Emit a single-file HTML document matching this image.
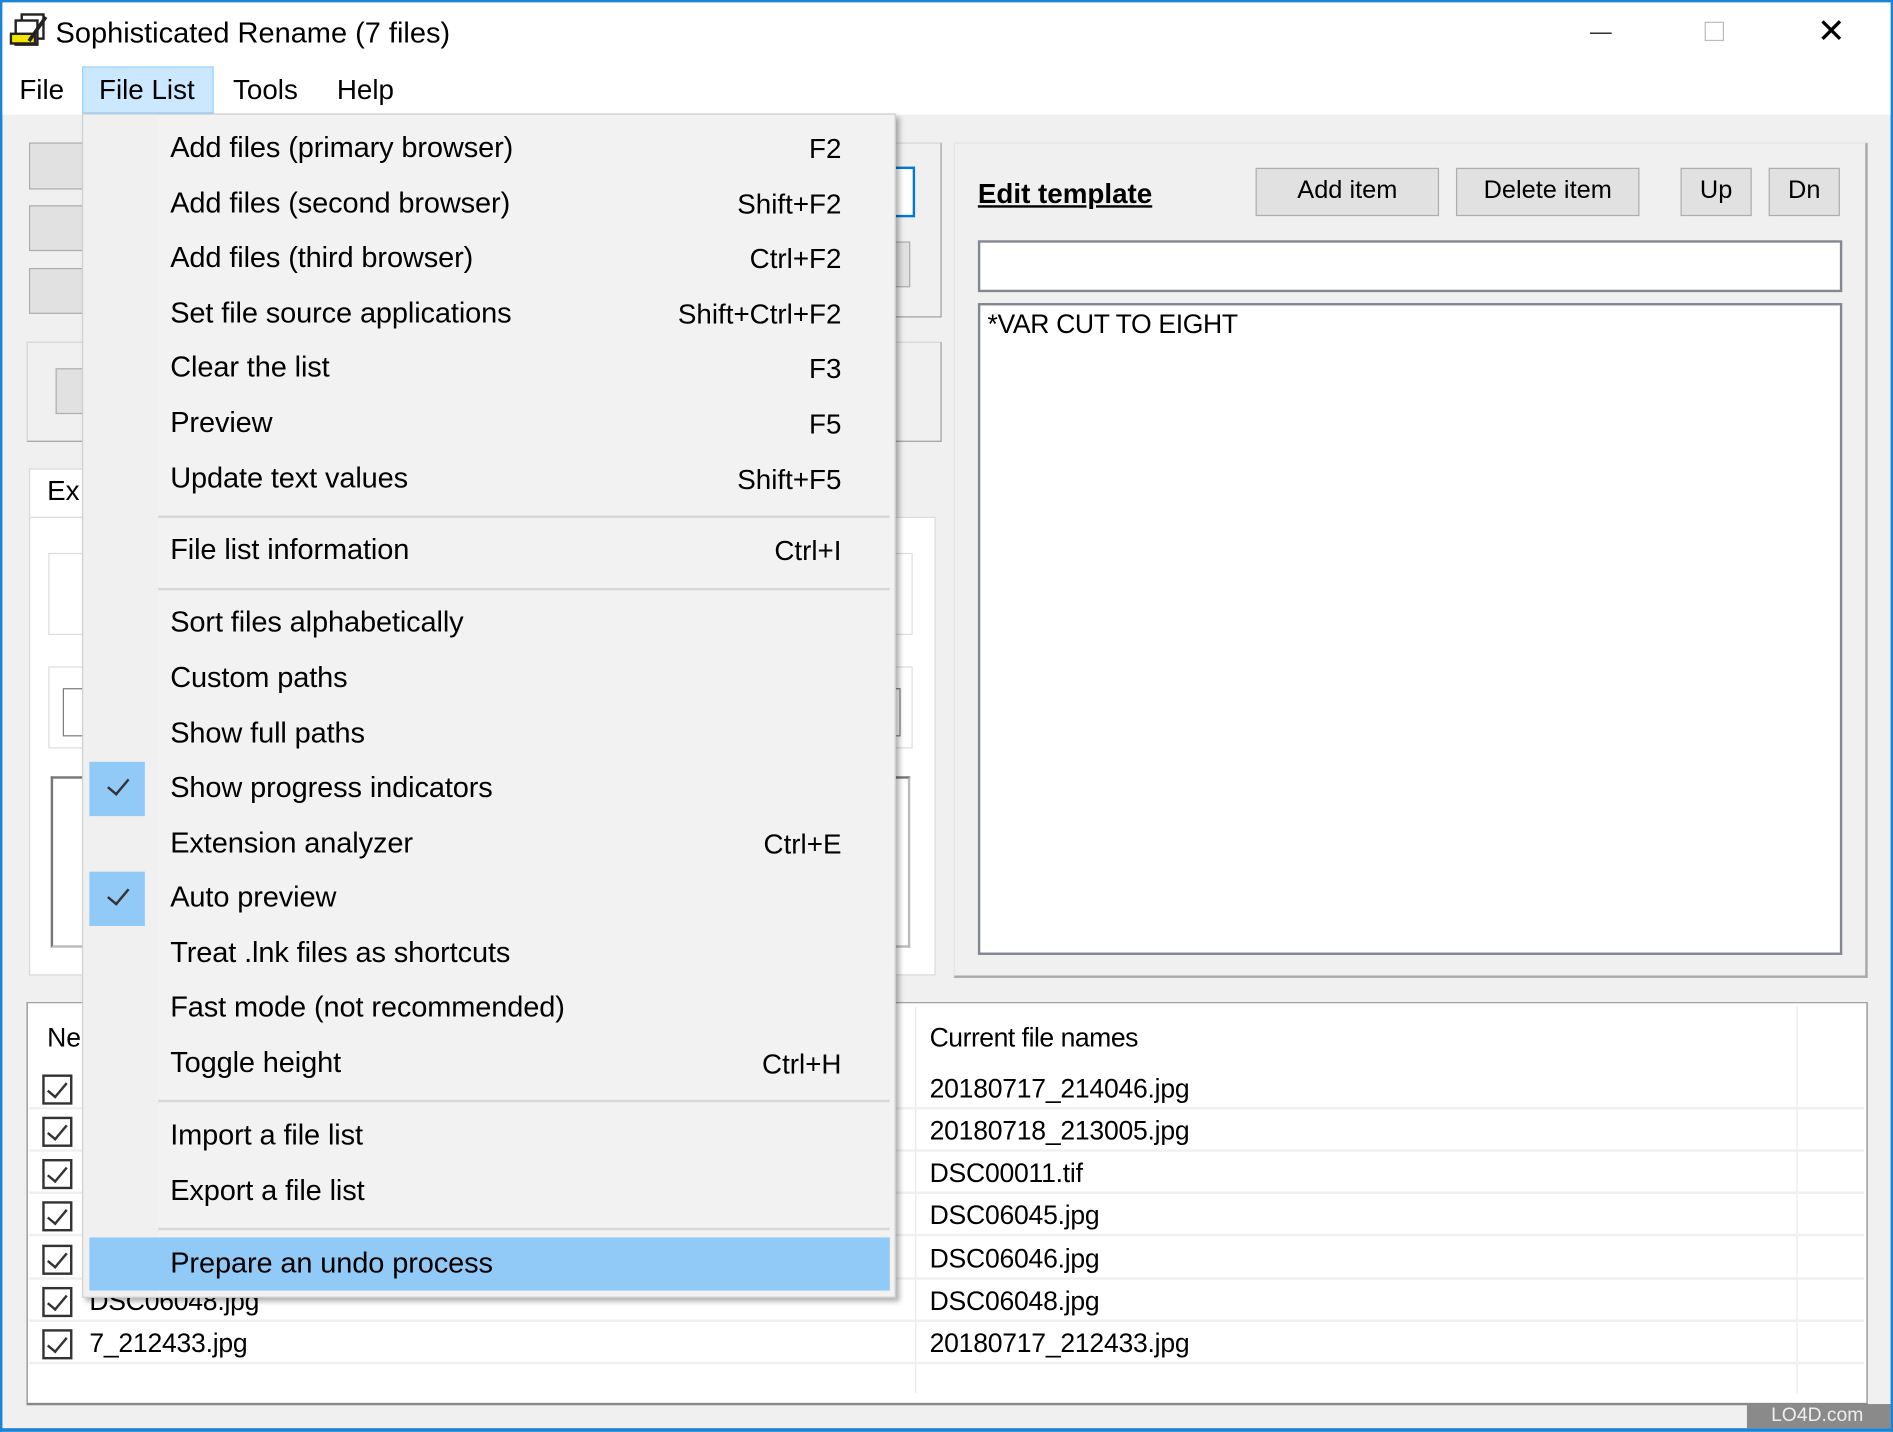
<!DOCTYPE html>
<html><head><meta charset="utf-8"><style>
*{margin:0;padding:0;box-sizing:border-box}
html,body{width:1893px;height:1432px;overflow:hidden;background:#f0f0f0}
#w{position:absolute;left:0;top:0;width:1568px;height:1186px;transform:scale(1.20727);transform-origin:0 0;font-family:"Liberation Sans",sans-serif;color:#000;background:#f0f0f0}
.a{position:absolute}
.t{position:absolute;white-space:nowrap;font-size:23px;line-height:28px}
.btn{position:absolute;background:#e1e1e1;border:1px solid #adadad;font-size:21px;text-align:center;line-height:36px}
.mi{position:absolute;left:72px;font-size:24px;line-height:28px;white-space:nowrap;letter-spacing:-0.1px}
.sc{position:absolute;right:44px;font-size:23px;line-height:28px;white-space:nowrap}
.sep{position:absolute;left:62px;width:606px;height:2px;background:#d8d8d8}
.row{position:absolute;left:24px;width:1520px;height:35px;border-bottom:2px solid #f0f0f0}
.cb{position:absolute;left:11px;top:6px;width:25px;height:25px;border:2px solid #333;background:#fff}
.cb:after{content:"";position:absolute;left:6px;top:1px;width:7px;height:14px;border:solid #333;border-width:0 2px 2px 0;transform:rotate(40deg)}
.fn{position:absolute;font-size:22px;line-height:35px;white-space:nowrap;letter-spacing:-0.2px}
.chk{position:absolute;left:5px;width:46px;height:45px;background:#91c9f7}
.chk:after{content:"";position:absolute;left:19px;top:10px;width:8px;height:15px;border:solid #333;border-width:0 2px 2px 0;transform:rotate(40deg)}
</style></head><body><div id="w">
<div class="a" style="left:0;top:0;width:1568px;height:2px;background:#1883d7"></div>
<div class="a" style="left:0;top:0;width:2px;height:1186px;background:#1883d7"></div>
<div class="a" style="left:1566px;top:0;width:2px;height:1186px;background:#1883d7"></div>
<div class="a" style="left:0;top:1183px;width:1568px;height:3px;background:#1883d7"></div>
<div class="a" style="left:2px;top:2px;width:1564px;height:93px;background:#fff"></div>
<svg class="a" style="left:8px;top:10px" width="34" height="32" viewBox="0 0 34 32"><rect x="10" y="2" width="18" height="20" fill="#fff" stroke="#222" stroke-width="2"/><rect x="5" y="7" width="18" height="20" fill="#fff" stroke="#222" stroke-width="2"/><rect x="1" y="18" width="20" height="8" fill="#f2e600" stroke="#222" stroke-width="2"/><path d="M16 24 L30 4" stroke="#222" stroke-width="3"/></svg>
<div class="t" style="left:46px;top:14px;font-size:24px">Sophisticated Rename (7 files)</div>
<div class="a" style="left:1317px;top:27px;width:18px;height:1px;background:#000"></div>
<div class="a" style="left:1412px;top:18px;width:16px;height:16px;border:1px solid #bbb"></div>
<div class="t" style="left:1505px;top:12px;font-size:28px;font-weight:300">✕</div>
<div class="t" style="left:16px;top:60px">File</div>
<div class="a" style="left:68px;top:55px;width:109px;height:39px;background:#cce8ff;border:1px solid #99d1ff"></div>
<div class="t" style="left:82px;top:60px">File List</div>
<div class="t" style="left:193px;top:60px">Tools</div>
<div class="t" style="left:279px;top:60px">Help</div>
<div class="a" style="left:24px;top:118px;width:60px;height:39px;background:#e1e1e1;border:1px solid #adadad"></div>
<div class="a" style="left:24px;top:170px;width:60px;height:38px;background:#e1e1e1;border:1px solid #adadad"></div>
<div class="a" style="left:24px;top:222px;width:60px;height:38px;background:#e1e1e1;border:1px solid #adadad"></div>
<div class="a" style="left:22px;top:283px;width:758px;height:83px;border:1px solid #d5d5d5;border-bottom-color:#a0a0a0;border-right-color:#a0a0a0"></div>
<div class="a" style="left:46px;top:305px;width:40px;height:38px;background:#e1e1e1;border:1px solid #adadad"></div>
<div class="a" style="left:740px;top:118px;width:40px;height:145px;border:1px solid #d5d5d5;border-right-color:#a0a0a0;border-bottom-color:#a0a0a0"></div>
<div class="a" style="left:730px;top:138px;width:28px;height:42px;background:#fff;border:2px solid #0078d7"></div>
<div class="a" style="left:730px;top:200px;width:24px;height:38px;background:#e1e1e1;border:1px solid #adadad"></div>
<div class="a" style="left:24px;top:388px;width:60px;height:42px;background:#fff;border:1px solid #d9d9d9;border-bottom:none"></div>
<div class="t" style="left:39px;top:392px">Ex</div>
<div class="a" style="left:24px;top:428px;width:751px;height:380px;background:#fff;border:1px solid #d9d9d9"></div>
<div class="a" style="left:40px;top:458px;width:716px;height:68px;border:1px solid #ddd"></div>
<div class="a" style="left:40px;top:552px;width:716px;height:68px;border:1px solid #ddd"></div>
<div class="a" style="left:52px;top:570px;width:694px;height:40px;border:1px solid #7a7a7a"></div>
<div class="a" style="left:42px;top:643px;width:712px;height:142px;border:2px solid #777;border-right-color:#bbb;border-bottom-color:#bbb"></div>
<div class="a" style="left:790px;top:118px;width:757px;height:692px;border:1px solid #e3e3e3;border-right:2px solid #a8a8a8;border-bottom:2px solid #a8a8a8"></div>
<div class="t" style="left:810px;top:146px;font-weight:bold;text-decoration:underline;font-size:23px">Edit template</div>
<div class="btn" style="left:1040px;top:139px;width:152px;height:40px">Add item</div>
<div class="btn" style="left:1206px;top:139px;width:152px;height:40px">Delete item</div>
<div class="btn" style="left:1392px;top:139px;width:59px;height:40px">Up</div>
<div class="btn" style="left:1465px;top:139px;width:59px;height:40px">Dn</div>
<div class="a" style="left:810px;top:199px;width:716px;height:43px;background:#fff;border:2px solid #828790"></div>
<div class="a" style="left:810px;top:251px;width:716px;height:540px;background:#fff;border:2px solid #828790"></div>
<div class="t" style="left:818px;top:255px;font-size:22px;letter-spacing:-0.3px">*VAR CUT TO EIGHT</div>
<div class="a" style="left:22px;top:830px;width:1525px;height:334px;background:#fff;border:1px solid #828790;border-top-color:#a0a0a0;border-bottom:2px solid #888"></div>
<div class="a" style="left:758px;top:834px;width:1px;height:320px;background:#eaeaea"></div>
<div class="a" style="left:1488px;top:834px;width:1px;height:320px;background:#eaeaea"></div>
<div class="t" style="left:39px;top:846px;font-size:22px">Ne</div>
<div class="t" style="left:770px;top:846px;font-size:22px;letter-spacing:-0.4px">Current file names</div>
<div class="row" style="top:884px"><div class="cb"></div><div class="fn" style="left:746px">20180717_214046.jpg</div></div>
<div class="row" style="top:919px"><div class="cb"></div><div class="fn" style="left:746px">20180718_213005.jpg</div></div>
<div class="row" style="top:954px"><div class="cb"></div><div class="fn" style="left:746px">DSC00011.tif</div></div>
<div class="row" style="top:989px"><div class="cb"></div><div class="fn" style="left:746px">DSC06045.jpg</div></div>
<div class="row" style="top:1025px"><div class="cb"></div><div class="fn" style="left:746px">DSC06046.jpg</div></div>
<div class="row" style="top:1060px"><div class="cb"></div><div class="fn" style="left:50px">DSC06048.jpg</div><div class="fn" style="left:746px">DSC06048.jpg</div></div>
<div class="row" style="top:1095px"><div class="cb"></div><div class="fn" style="left:50px">7_212433.jpg</div><div class="fn" style="left:746px">20180717_212433.jpg</div></div>
<div class="a" style="left:1447px;top:1163px;width:119px;height:20px;background:#8a8a8a;color:#eee;font-size:16px;line-height:20px;padding-left:20px">LO4D.com</div>
<div class="a" style="left:68px;top:94px;width:674px;height:981px;background:#f2f2f2;border:1px solid #ccc;box-shadow:3px 3px 4px rgba(0,0,0,0.3)">
<div class="a" style="left:0;top:0;width:62px;height:979px;background:#f0f0f0"></div>
<div class="mi" style="top:14px">Add files (primary browser)</div><div class="sc" style="top:14px">F2</div>
<div class="mi" style="top:60px">Add files (second browser)</div><div class="sc" style="top:60px">Shift+F2</div>
<div class="mi" style="top:105px">Add files (third browser)</div><div class="sc" style="top:105px">Ctrl+F2</div>
<div class="mi" style="top:151px">Set file source applications</div><div class="sc" style="top:151px">Shift+Ctrl+F2</div>
<div class="mi" style="top:196px">Clear the list</div><div class="sc" style="top:196px">F3</div>
<div class="mi" style="top:242px">Preview</div><div class="sc" style="top:242px">F5</div>
<div class="mi" style="top:288px">Update text values</div><div class="sc" style="top:288px">Shift+F5</div>
<div class="sep" style="top:332px"></div>
<div class="mi" style="top:347px">File list information</div><div class="sc" style="top:347px">Ctrl+I</div>
<div class="sep" style="top:392px"></div>
<div class="mi" style="top:407px">Sort files alphabetically</div>
<div class="mi" style="top:453px">Custom paths</div>
<div class="mi" style="top:499px">Show full paths</div>
<div class="chk" style="top:536px"></div>
<div class="mi" style="top:544px">Show progress indicators</div>
<div class="mi" style="top:590px">Extension analyzer</div><div class="sc" style="top:590px">Ctrl+E</div>
<div class="chk" style="top:627px"></div>
<div class="mi" style="top:635px">Auto preview</div>
<div class="mi" style="top:681px">Treat .lnk files as shortcuts</div>
<div class="mi" style="top:726px">Fast mode (not recommended)</div>
<div class="mi" style="top:772px">Toggle height</div><div class="sc" style="top:772px">Ctrl+H</div>
<div class="sep" style="top:816px"></div>
<div class="mi" style="top:832px">Import a file list</div>
<div class="mi" style="top:878px">Export a file list</div>
<div class="sep" style="top:922px"></div>
<div class="a" style="left:5px;top:930px;width:663px;height:44px;background:#91c9f7"></div>
<div class="mi" style="top:938px">Prepare an undo process</div>
</div>
</div></body></html>
